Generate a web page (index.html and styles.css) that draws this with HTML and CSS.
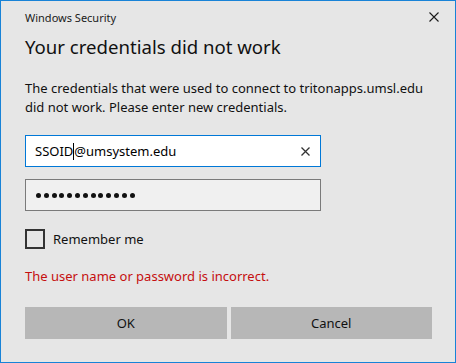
FILE: index.html
```html
<!DOCTYPE html>
<html lang="en">
<head>
    <meta charset="UTF-8">
    <meta name="viewport" content="width=device-width, initial-scale=1.0">
    <title>Windows Security</title>
    <link rel="stylesheet" href="styles.css">
</head>
<body>

<div class="dialog">
    <div class="titlebar">
        <span class="title">Windows Security</span>
        <span class="close">
            <svg width="10" height="10" viewBox="0 0 10 10">
                <path d="M0.5 0.5 L9.5 9.5 M9.5 0.5 L0.5 9.5" stroke="#1a1a1a" stroke-width="1.1" fill="none"/>
            </svg>
        </span>
    </div>

    <div class="content">
        <h1>Your credentials did not work</h1>
        <p class="message">The credentials that were used to connect to tritonapps.umsl.edu did not work. Please enter new credentials.</p>

        <div class="field focused">
            <span class="value">SSOID<span class="caret"></span>@umsystem.edu</span>
            <svg class="clear" width="9" height="9" viewBox="0 0 9 9">
                <path d="M0.5 0.5 L8.5 8.5 M8.5 0.5 L0.5 8.5" stroke="#333" stroke-width="1.3" fill="none"/>
            </svg>
        </div>

        <div class="field password">
            <span class="dot"></span><span class="dot"></span><span class="dot"></span><span class="dot"></span>
            <span class="dot"></span><span class="dot"></span><span class="dot"></span><span class="dot"></span>
            <span class="dot"></span><span class="dot"></span><span class="dot"></span><span class="dot"></span>
            <span class="dot"></span>
        </div>

        <label class="remember">
            <span class="checkbox"></span>
            <span>Remember me</span>
        </label>

        <p class="error">The user name or password is incorrect.</p>

        <div class="buttons">
            <button class="button">OK</button>
            <button class="button">Cancel</button>
        </div>
    </div>
</div>

</body>
</html>
```

FILE: styles.css
```css
body {
    margin: 0;
    font-family: 'Noto Sans', sans-serif;
    color: #000;
}

.dialog {
    width: 456px;
    height: 363px;
    box-sizing: border-box;
    border: 1px solid #1883d7;
    background-color: #e6e6e6;
}

.titlebar {
    height: 32px;
    display: flex;
    align-items: center;
    justify-content: space-between;
    padding: 0 16px 0 24px;
}

.title {
    font-size: 11px;
    color: #1a1a1a;
}

.close {
    display: flex;
}

.content {
    padding: 0 23px 0 24px;
}

h1 {
    font-size: 18.6px;
    font-weight: 400;
    line-height: 28px;
    margin: 0 0 18px 0;
    color: #111;
}

.message {
    font-size: 13px;
    line-height: 19px;
    margin: 0 0 18px 0;
    color: #111;
}

.field {
    width: 296px;
    height: 32px;
    box-sizing: border-box;
    display: flex;
    align-items: center;
    padding: 0 10px 0 9px;
    font-size: 13px;
}

.focused {
    border: 1px solid #0078d7;
    background-color: #fff;
    justify-content: space-between;
    margin-bottom: 12px;
}

.caret {
    display: inline-block;
    width: 1px;
    height: 17px;
    background-color: #000;
    vertical-align: -4px;
}

.password {
    border: 1px solid #7a7a7a;
    background-color: #f0f0f0;
    gap: 2.8px;
    padding-left: 10px;
    margin-bottom: 18px;
}

.dot {
    width: 5px;
    height: 5px;
    border-radius: 50%;
    background-color: #111;
}

.remember {
    display: flex;
    align-items: center;
    gap: 8px;
    font-size: 13px;
    color: #111;
}

.checkbox {
    width: 20px;
    height: 20px;
    box-sizing: border-box;
    border: 2px solid #333;
}

.error {
    font-size: 13px;
    color: #c50f0f;
    margin: 18px 0 0 0;
}

.buttons {
    display: flex;
    gap: 4px;
    margin-top: 22px;
}

.button {
    flex: 1;
    height: 32px;
    border: none;
    background-color: #b7b7b7;
    font-family: 'Noto Sans', sans-serif;
    font-size: 13px;
    color: #111;
}
```
